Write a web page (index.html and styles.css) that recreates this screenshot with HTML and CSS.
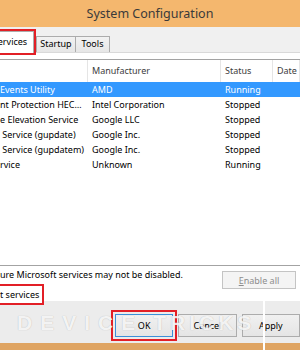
FILE: index.html
```html
<!DOCTYPE html>
<html lang="en">
<head>
    <meta charset="UTF-8">
    <meta name="viewport" content="width=device-width, initial-scale=1.0">
    <title>System Configuration</title>
    <link rel="stylesheet" href="styles.css">
</head>
<body>
    <div class="titlebar">System Configuration</div>
    <div class="window">
        <!-- tab strip, first tab runs off the left edge -->
        <div class="tabs">
            <div class="tab tab-services active">Services</div>
            <div class="tab tab-startup">Startup</div>
            <div class="tab tab-tools">Tools</div>
        </div>
        <div class="pane">
            <div class="list">
                <div class="list-head">
                    <span></span>
                    <span>Manufacturer</span>
                    <span>Status</span>
                    <span>Date</span>
                </div>
                <div class="row selected">
                    <span>Events Utility</span>
                    <span>AMD</span>
                    <span>Running</span>
                    <span></span>
                </div>
                <div class="row">
                    <span>nt Protection HEC…</span>
                    <span>Intel Corporation</span>
                    <span>Stopped</span>
                    <span></span>
                </div>
                <div class="row">
                    <span>e Elevation Service</span>
                    <span>Google LLC</span>
                    <span>Stopped</span>
                    <span></span>
                </div>
                <div class="row">
                    <span> Service (gupdate)</span>
                    <span>Google Inc.</span>
                    <span>Stopped</span>
                    <span></span>
                </div>
                <div class="row">
                    <span> Service (gupdatem)</span>
                    <span>Google Inc.</span>
                    <span>Stopped</span>
                    <span></span>
                </div>
                <div class="row">
                    <span>rvice</span>
                    <span>Unknown</span>
                    <span>Running</span>
                    <span></span>
                </div>
            </div>
            <div class="note-row">
                <span class="note">ure Microsoft services may not be disabled.</span>
                <button class="btn btn-enable" disabled><u>E</u>nable all</button>
            </div>
            <div class="hide-row">
                <span class="hide-label">t services</span>
            </div>
        </div>
        <!-- dialog buttons -->
        <div class="actions">
            <button class="btn btn-ok">OK</button>
            <button class="btn">Cancel</button>
            <button class="btn">Apply</button>
        </div>
        <div class="watermark"><span class="wm-device">DEVICE</span><span class="wm-tricks">TRICKS</span></div>
        <div class="watermark-line"></div>
    </div>
    <div class="bottom-edge"></div>
</body>
</html>
```

FILE: styles.css
```css
* {
    margin: 0;
    padding: 0;
    box-sizing: border-box;
}
body {
    width: 300px;
    height: 350px;
    overflow: hidden;
    font-family: "Noto Sans", sans-serif;
    font-size: 9px;
    color: #000;
    background-color: #f0f0f0;
}
.titlebar {
    height: 27px;
    line-height: 27px;
    text-align: center;
    font-size: 12.5px;
    color: #3a3a3a;
    background-color: #f4b76e;
}
.window {
    position: relative;
    height: 316px;
    display: flex;
    flex-direction: column;
    background-color: #ececec;
}

/* tabs */
.tabs {
    display: flex;
    align-items: flex-end;
    height: 25px;
    margin-left: -14px;
    position: relative;
    z-index: 1;
    background-color: #f0f0f0;
}
.tab {
    height: 16px;
    line-height: 14px;
    text-align: center;
    border: 1px solid #acacac;
    border-bottom: none;
    background: linear-gradient(#f2f2f2, #e6e6e6);
    color: #000;
}
.tab.active {
    height: 22px;
    line-height: 20px;
    margin-bottom: -1px;
    background: #fff;
    outline: 2px solid #e21f26;
}
.tab-services {
    width: 48px;
}
.tab-startup {
    width: 40px;
    margin-left: 2px;
}
.tab-tools {
    width: 35px;
    margin-left: -1px;
}

/* tab page */
.pane {
    height: 249px;
    padding-top: 6px;
    background-color: #fff;
    border-top: 1px solid #d9d9d9;
}
.list {
    height: 207px;
    border-top: 1px solid #a3a3a3;
    border-bottom: 1px solid #a3a3a3;
}
.list-head,
.row {
    display: grid;
    grid-template-columns: 88px 133px 52px 1fr;
}
.list-head {
    height: 22px;
    line-height: 22px;
    color: #3c3c3c;
}
.list-head span {
    padding-left: 4px;
    border-right: 1px solid #e5e5e5;
}
.row {
    height: 15px;
    line-height: 15px;
}
.row span {
    padding-left: 4px;
    white-space: pre;
    overflow: hidden;
}
.row span:first-child {
    padding-left: 0;
}
.row.selected {
    background-color: #3399ff;
    color: #fff;
}
.note-row {
    display: flex;
    justify-content: space-between;
    align-items: flex-start;
    padding: 5px 4px 0 0;
}
.note {
    line-height: 12px;
    margin-top: -2px;
}
.btn {
    font-family: inherit;
    font-size: 9px;
    color: #000;
    height: 23px;
    width: 67px;
    border: 1px solid #acacac;
    background: linear-gradient(#f0f0f0, #e5e5e5);
}
.btn-enable {
    width: 74px;
    height: 18px;
    color: #8d8d8d;
    background: #f4f4f4;
    border-color: #c4c4c4;
}
.hide-row {
    margin-top: -3px;
}
.hide-label {
    display: inline-block;
    height: 17px;
    line-height: 17px;
    margin-left: -4px;
    padding: 0 3px 0 4px;
    background-color: #fff;
    outline: 2px solid #e21f26;
}

/* dialog buttons */
.actions {
    display: flex;
    gap: 5px;
    margin-top: 13px;
    padding-left: 115px;
}
.btn-ok {
    border-color: #3c8fd8;
    outline: 2px solid #e21f26;
    outline-offset: 2px;
}
.watermark {
    position: absolute;
    left: 17px;
    top: 285px;
    display: flex;
    gap: 10px;
    font-family: "Liberation Sans", sans-serif;
    font-weight: bold;
    font-size: 21px;
    line-height: 22px;
    color: rgba(255, 255, 255, 0.85);
    text-shadow: 0 0 1px rgba(0, 0, 0, 0.25);
    pointer-events: none;
}
.wm-device {
    letter-spacing: 8px;
}
.wm-tricks {
    letter-spacing: 4px;
}
.watermark-line {
    position: absolute;
    left: 263px;
    top: 273px;
    width: 2px;
    height: 50px;
    background-color: #fff;
}
.bottom-edge {
    height: 7px;
    background-color: #dfa462;
}
```
